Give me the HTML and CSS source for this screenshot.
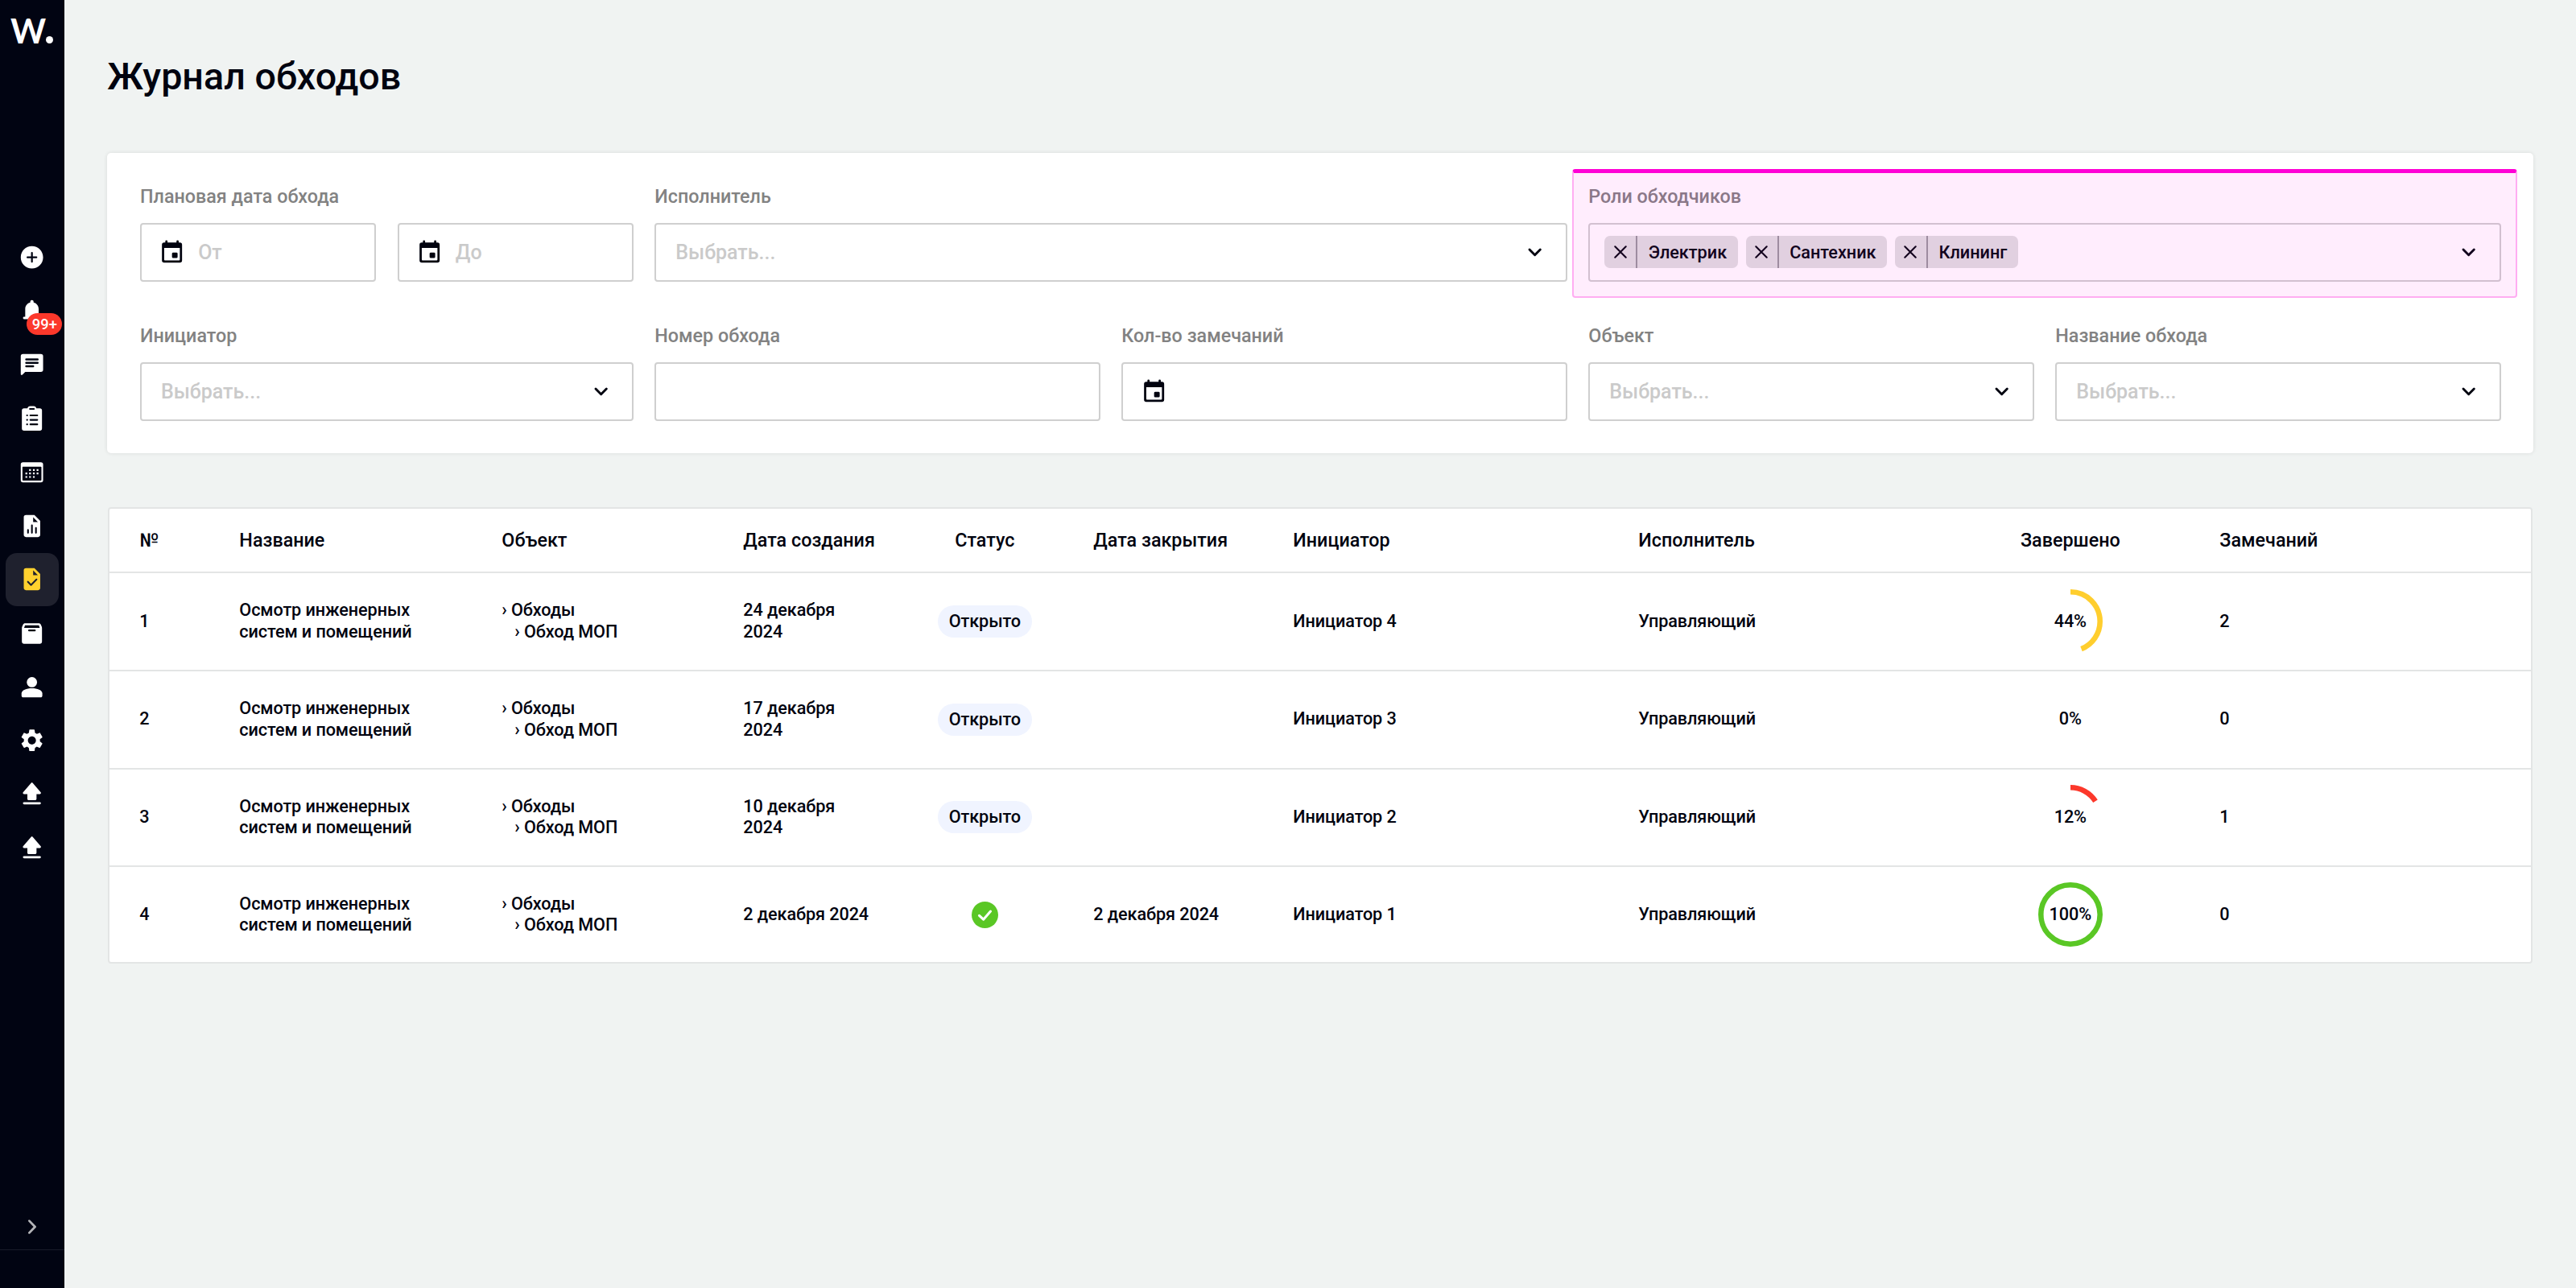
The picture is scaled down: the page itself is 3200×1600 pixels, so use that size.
FILE: index.html
```html
<!DOCTYPE html>
<html lang="ru">
<head>
  <meta charset="UTF-8" />
  <meta name="viewport" content="width=device-width, initial-scale=1.0" />
  <title>Журнал обходов</title>
  <link rel="stylesheet" href="styles.css">
</head>
<body>
  <svg class="sprite" aria-hidden="true">
    <symbol id="chevron" viewBox="0 0 24 24">
      <path d="M7.2 9.4l4.8 4.8 4.8-4.8" fill="none" stroke="currentColor" stroke-width="2.1" stroke-linecap="round" stroke-linejoin="round" />
    </symbol>
    <symbol id="event" viewBox="0 0 24 24">
      <path fill-rule="evenodd" d="M7 1a1 1 0 0 1 1 1v1h8V2a1 1 0 0 1 2 0v1h1a2 2 0 0 1 2 2v14a2 2 0 0 1-2 2H5a2 2 0 0 1-2-2V5a2 2 0 0 1 2-2h1V2a1 1 0 0 1 1-1zM5 8v10.3a.7.7 0 0 0 .7.7h12.6a.7.7 0 0 0 .7-.7V8zM13 12h3a1 1 0 0 1 1 1v3a1 1 0 0 1-1 1h-3a1 1 0 0 1-1-1v-3a1 1 0 0 1 1-1z" />
    </symbol>
    <symbol id="close" viewBox="0 0 16 16">
      <path d="M1.3 1.3l13.4 13.4M14.7 1.3L1.3 14.7" fill="none" stroke="currentColor" stroke-width="2.1" stroke-linecap="round" />
    </symbol>
    <symbol id="upload" viewBox="0 0 24 24">
      <path d="M11.4 1.8a.8.8 0 0 1 1.2 0l7.3 8.5c.5.6.1 1.5-.7 1.5h-3.1v4.4a1 1 0 0 1-1 1H8.9a1 1 0 0 1-1-1v-4.4H4.8c-.8 0-1.2-.9-.7-1.5zM5 19h14a1 1 0 0 1 0 2.1H5A1 1 0 0 1 5 19z" />
    </symbol>
  </svg>

  <aside class="sidebar">
    <div class="logo">W<span class="logo-dot"></span></div>

    <nav class="menu">
      <a class="menu-item">
        <svg viewBox="0 0 24 24"><path d="M12 2C6.48 2 2 6.48 2 12s4.48 10 10 10 10-4.48 10-10S17.52 2 12 2zm4 10.8h-3.2V16a.8.8 0 0 1-1.6 0v-3.2H8a.8.8 0 0 1 0-1.6h3.2V8a.8.8 0 0 1 1.6 0v3.2H16a.8.8 0 0 1 0 1.6z" /></svg>
      </a>
      <a class="menu-item">
        <svg viewBox="0 0 24 24"><path d="M5 19a1 1 0 0 1 0-2h1v-7c0-2.9 1.8-5.1 4.5-5.8v-.7a1.5 1.5 0 0 1 3 0v.7C16.2 4.9 18 7.1 18 10v7h1a1 1 0 0 1 0 2zM10 20h4a2 2 0 0 1-4 0z" /></svg>
        <span class="badge">99+</span>
      </a>
      <a class="menu-item">
        <svg viewBox="0 0 24 24"><path fill-rule="evenodd" d="M4 2h16a2 2 0 0 1 2 2v12a2 2 0 0 1-2 2H6l-2.5 2.5c-.6.6-1.5.2-1.5-.6V4a2 2 0 0 1 2-2zM6.9 6a.9.9 0 0 0 0 1.8h10.2a.9.9 0 0 0 0-1.8zM6.9 9a.9.9 0 0 0 0 1.8h10.2a.9.9 0 0 0 0-1.8zM6.9 12a.9.9 0 0 0 0 1.8h6.2a.9.9 0 0 0 0-1.8z" /></svg>
      </a>
      <a class="menu-item">
        <svg viewBox="0 0 24 24"><path d="M5 3h3c.2-1.2 1.2-2 2.4-2h3.2c1.2 0 2.2.8 2.4 2h3a2 2 0 0 1 2 2v16a2 2 0 0 1-2 2H5a2 2 0 0 1-2-2V5a2 2 0 0 1 2-2z" />
          <path class="cut" d="M10.2 3.6h3.6M10.6 9.4h6.2M10.6 13.4h6.2M10.6 17.4h6.2M7.6 9.4h.2M7.6 13.4h.2M7.6 17.4h.2" /></svg>
      </a>
      <a class="menu-item">
        <svg viewBox="0 0 24 24"><path fill-rule="evenodd" d="M4 3h16a2 2 0 0 1 2 2v14a2 2 0 0 1-2 2H4a2 2 0 0 1-2-2V5a2 2 0 0 1 2-2zM4 7a.5.5 0 0 0-.5.5v11.3a.7.7 0 0 0 .7.7h15.6a.7.7 0 0 0 .7-.7V7.5A.5.5 0 0 0 20 7z" />
          <path d="M9.5 9.2h1.6v1.6H9.5zM12.9 9.2h1.6v1.6h-1.6zM16.2 9.2h1.6v1.6h-1.6zM6.2 12.3h1.6v1.6H6.2zM9.5 12.3h1.6v1.6H9.5zM12.9 12.3h1.6v1.6h-1.6zM16.2 12.3h1.6v1.6h-1.6zM6.2 15.4h1.6V17H6.2zM9.5 15.4h1.6V17H9.5zM12.9 15.4h1.6V17h-1.6z" /></svg>
      </a>
      <a class="menu-item">
        <svg viewBox="0 0 24 24"><path fill-rule="evenodd" d="M6.7 2h7.5l5.2 5.2v12.5a2 2 0 0 1-2 2H6.7a2 2 0 0 1-2-2V4a2 2 0 0 1 2-2zM13.1 4v4.2h4.2z" />
          <path class="cut" d="M8.5 15.3v2.6M12 11.2v6.7M15.6 13.5v4.4" /></svg>
      </a>
      <a class="menu-item active">
        <svg viewBox="0 0 24 24"><path fill-rule="evenodd" d="M6.7 2h7.5l5.2 5.2v12.5a2 2 0 0 1-2 2H6.7a2 2 0 0 1-2-2V4a2 2 0 0 1 2-2zM13.1 4v4.2h4.2z" />
          <path class="cut" d="M8.4 14.2l2.8 2.9 4.9-5" /></svg>
      </a>
      <a class="menu-item">
        <svg viewBox="0 0 24 24"><path fill-rule="evenodd" d="M5.8 3h12.4c.7 0 1.3.4 1.6 1l.9 2c.2.5.3.9.3 1.4v12.3a1.7 1.7 0 0 1-1.7 1.7H4.7A1.7 1.7 0 0 1 3 19.7V7.4c0-.5.1-.9.3-1.4l.9-2c.3-.6.9-1 1.6-1zM5.8 4.8L5 7.2h14l-.8-2.4zM9.4 8.7a.8.8 0 0 0 0 1.6h5.2a.8.8 0 0 0 0-1.6z" /></svg>
      </a>
      <a class="menu-item">
        <svg viewBox="0 0 24 24"><circle cx="12" cy="7.5" r="4.6" /><path d="M12 13c4.8 0 9.3 1.7 9.3 4.6v2c0 .9-.6 1.5-1.5 1.5H4.2c-.9 0-1.5-.6-1.5-1.5v-2C2.7 14.7 7.2 13 12 13z" /></svg>
      </a>
      <a class="menu-item">
        <svg viewBox="0 0 24 24"><path d="M19.14 12.94c.04-.3.06-.61.06-.94 0-.32-.02-.64-.07-.94l2.03-1.58c.18-.14.23-.41.12-.61l-1.92-3.32c-.12-.22-.37-.29-.59-.22l-2.39.96c-.5-.38-1.03-.7-1.62-.94l-.36-2.54c-.04-.24-.24-.41-.48-.41h-3.84c-.24 0-.43.17-.47.41l-.36 2.54c-.59.24-1.13.57-1.62.94l-2.39-.96c-.22-.08-.47 0-.59.22L2.74 8.87c-.12.21-.08.47.12.61l2.03 1.58c-.05.3-.09.63-.09.94s.02.64.07.94l-2.03 1.58c-.18.14-.23.41-.12.61l1.92 3.32c.12.22.37.29.59.22l2.39-.96c.5.38 1.03.7 1.62.94l.36 2.54c.05.24.24.41.48.41h3.84c.24 0 .44-.17.47-.41l.36-2.54c.59-.24 1.13-.56 1.62-.94l2.39.96c.22.08.47 0 .59-.22l1.92-3.32c.12-.22.07-.47-.12-.61l-2.01-1.58zM12 15.6c-1.98 0-3.6-1.62-3.6-3.6s1.62-3.6 3.6-3.6 3.6 1.62 3.6 3.6-1.62 3.6-3.6 3.6z" /></svg>
      </a>
      <a class="menu-item"><svg><use href="#upload" /></svg></a>
      <a class="menu-item"><svg><use href="#upload" /></svg></a>
    </nav>

    <div class="expand">
      <svg viewBox="0 0 24 24"><path d="M9.5 6.8l5 5.2-5 5.2" /></svg>
    </div>
    <div class="sidebar-footer"></div>
  </aside>

  <main class="content">
    <h1>Журнал обходов</h1>

    <section class="filters">
      <div class="field">
        <label>Плановая дата обхода</label>
        <div class="dates">
          <div class="input"><svg class="icon"><use href="#event" /></svg><span>От</span></div>
          <div class="input"><svg class="icon"><use href="#event" /></svg><span>До</span></div>
        </div>
      </div>
      <div class="field span-2">
        <label>Исполнитель</label>
        <div class="input select"><span>Выбрать...</span><svg class="icon"><use href="#chevron" /></svg></div>
      </div>
      <div class="field span-2 highlight">
        <label>Роли обходчиков</label>
        <div class="input select with-tags">
          <div class="tags">
            <div class="tag"><button aria-label="Удалить"><svg><use href="#close" /></svg></button><b>Электрик</b></div>
            <div class="tag"><button aria-label="Удалить"><svg><use href="#close" /></svg></button><b>Сантехник</b></div>
            <div class="tag"><button aria-label="Удалить"><svg><use href="#close" /></svg></button><b>Клининг</b></div>
          </div>
          <svg class="icon"><use href="#chevron" /></svg>
        </div>
      </div>

      <div class="field">
        <label>Инициатор</label>
        <div class="input select"><span>Выбрать...</span><svg class="icon"><use href="#chevron" /></svg></div>
      </div>
      <div class="field">
        <label>Номер обхода</label>
        <div class="input"></div>
      </div>
      <div class="field">
        <label>Кол-во замечаний</label>
        <div class="input"><svg class="icon"><use href="#event" /></svg></div>
      </div>
      <div class="field">
        <label>Объект</label>
        <div class="input select"><span>Выбрать...</span><svg class="icon"><use href="#chevron" /></svg></div>
      </div>
      <div class="field">
        <label>Название обхода</label>
        <div class="input select"><span>Выбрать...</span><svg class="icon"><use href="#chevron" /></svg></div>
      </div>
    </section>

    <section class="table">
      <div class="row head">
        <div>№</div>
        <div>Название</div>
        <div>Объект</div>
        <div>Дата создания</div>
        <div class="center">Статус</div>
        <div>Дата закрытия</div>
        <div>Инициатор</div>
        <div>Исполнитель</div>
        <div class="center">Завершено</div>
        <div>Замечаний</div>
      </div>

      <div class="row">
        <div>1</div>
        <div>Осмотр инженерных<br>систем и помещений</div>
        <div>› Обходы<p class="nested">› Обход МОП</p></div>
        <div>24 декабря<br>2024</div>
        <div class="center"><span class="status">Открыто</span></div>
        <div></div>
        <div>Инициатор 4</div>
        <div>Управляющий</div>
        <div class="center">
          <div class="progress yellow">
            <svg viewBox="0 0 80 80"><circle cx="40" cy="40" r="36.7" pathLength="100" stroke-dasharray="44 100" /></svg>
            <span>44%</span>
          </div>
        </div>
        <div>2</div>
      </div>

      <div class="row">
        <div>2</div>
        <div>Осмотр инженерных<br>систем и помещений</div>
        <div>› Обходы<p class="nested">› Обход МОП</p></div>
        <div>17 декабря<br>2024</div>
        <div class="center"><span class="status">Открыто</span></div>
        <div></div>
        <div>Инициатор 3</div>
        <div>Управляющий</div>
        <div class="center">
          <div class="progress"><span>0%</span></div>
        </div>
        <div>0</div>
      </div>

      <div class="row">
        <div>3</div>
        <div>Осмотр инженерных<br>систем и помещений</div>
        <div>› Обходы<p class="nested">› Обход МОП</p></div>
        <div>10 декабря<br>2024</div>
        <div class="center"><span class="status">Открыто</span></div>
        <div></div>
        <div>Инициатор 2</div>
        <div>Управляющий</div>
        <div class="center">
          <div class="progress red">
            <svg viewBox="0 0 80 80"><circle cx="40" cy="40" r="36.7" pathLength="100" stroke-dasharray="16 100" /></svg>
            <span>12%</span>
          </div>
        </div>
        <div>1</div>
      </div>

      <div class="row">
        <div>4</div>
        <div>Осмотр инженерных<br>систем и помещений</div>
        <div>› Обходы<p class="nested">› Обход МОП</p></div>
        <div>2 декабря 2024</div>
        <div class="center">
          <svg class="done" viewBox="0 0 32 32"><circle cx="16" cy="16" r="16" /><path d="M9.2 16.8l5 4.7 8.6-9.8" /></svg>
        </div>
        <div>2 декабря 2024</div>
        <div>Инициатор 1</div>
        <div>Управляющий</div>
        <div class="center">
          <div class="progress green">
            <svg viewBox="0 0 80 80"><circle cx="40" cy="40" r="36.7" /></svg>
            <span>100%</span>
          </div>
        </div>
        <div>0</div>
      </div>
    </section>
  </main>
</body>
</html>
```
FILE: styles.css
```css
* {
  box-sizing: border-box;
}

body {
  margin: 0;
  height: 100vh;
  display: flex;
  background-color: #f0f3f2;
  color: #01030f;
  font-family: Roboto, sans-serif;
  font-weight: 500;
}

.sprite {
  position: absolute;
  width: 0;
  height: 0;
}

/* Sidebar */

.sidebar {
  width: 80px;
  flex-shrink: 0;
  display: flex;
  flex-direction: column;
  background-color: #010412;
}

.logo {
  height: 286.67px;
  padding: 14px 0 0 13px;
  display: flex;
  align-items: baseline;
  color: white;
  font-family: Lato, sans-serif;
  font-size: 42px;
  font-weight: 700;
  line-height: 49px;
}

.logo-dot {
  width: 9px;
  height: 9px;
  border-radius: 50%;
  background-color: white;
}

.menu-item {
  position: relative;
  width: 66.67px;
  height: 66.67px;
  margin: 0 auto;
  display: flex;
  align-items: center;
  justify-content: center;
  border-radius: 14px;
}

.menu-item svg {
  width: 33.33px;
  height: 33.33px;
  fill: white;
}

.menu-item .cut {
  fill: none;
  stroke: #010412;
  stroke-width: 1.5;
  stroke-linecap: round;
  stroke-linejoin: round;
}

.menu-item.active {
  background-color: #1f212e;
}

.menu-item.active svg {
  fill: #ffd12e;
}

.menu-item.active .cut {
  stroke: #1f212e;
}

.badge {
  position: absolute;
  top: 36px;
  right: -4px;
  width: 44px;
  height: 27px;
  border-radius: 14px;
  background-color: #fc382b;
  color: white;
  font-size: 18.33px;
  line-height: 28px;
  text-align: center;
}

.expand {
  margin-top: auto;
  height: 57px;
  display: flex;
  align-items: center;
  justify-content: center;
  border-bottom: 1px solid #191c2a;
}

.expand svg {
  width: 34px;
  height: 34px;
  fill: none;
  stroke: #b3b4b8;
  stroke-width: 2;
  stroke-linecap: round;
  stroke-linejoin: round;
}

.sidebar-footer {
  height: 47px;
}

/* Content */

.content {
  flex: 1;
  padding: 67px 53.33px 0;
}

h1 {
  margin: 0 0 67px;
  font-size: 46.67px;
  font-weight: 500;
  line-height: 56px;
}

.filters {
  display: grid;
  grid-template-columns: 612.67px repeat(4, 1fr);
  gap: 51.33px 26.67px;
  padding: 38px 40px 40px 40.67px;
  border-radius: 5px;
  background-color: white;
  box-shadow: 0 0 5px rgba(0, 0, 0, 0.1);
}

.field label {
  display: block;
  margin-bottom: 15.33px;
  color: #828282;
  font-size: 23.33px;
  line-height: 33.33px;
}

.span-2 {
  grid-column: span 2;
}

.dates {
  display: flex;
  gap: 26.67px;
}

.input {
  flex: 1;
  height: 73.33px;
  padding: 0 21.33px;
  display: flex;
  align-items: center;
  gap: 15.5px;
  border: 2px solid #cfcfcf;
  border-radius: 4px;
  color: #cacaca;
  font-size: 25px;
}

.select {
  justify-content: space-between;
  padding-left: 24px;
}

.icon {
  width: 33.33px;
  height: 33.33px;
  color: #01030f;
  fill: #01030f;
}

.highlight {
  position: relative;
}

.highlight::after {
  content: "";
  position: absolute;
  top: -18px;
  right: -20px;
  bottom: -20px;
  left: -20px;
  border: 2px solid rgba(255, 0, 214, 0.27);
  border-top: 5px solid #ff00d6;
  border-radius: 4px;
  background-color: rgba(255, 0, 230, 0.07);
}

.with-tags {
  padding-left: 18px;
}

.tags {
  display: flex;
  gap: 10px;
}

.tag {
  height: 40px;
  display: flex;
  align-items: center;
  border-radius: 7px;
  background-color: #dfe0e0;
  color: #01030f;
  font-size: 21.67px;
}

.tag button {
  width: 41px;
  height: 40px;
  padding: 0;
  display: flex;
  align-items: center;
  justify-content: center;
  border: none;
  border-right: 2px solid #97979b;
  background: none;
}

.tag button svg {
  width: 16px;
  height: 16px;
  color: #01030f;
}

.tag b {
  padding: 0 13.5px;
  font-weight: 500;
}

/* Table */

.table {
  margin: 67px 1px 0;
  border: 2px solid #e3e5e5;
  border-radius: 4px;
  background-color: white;
  font-size: 21.67px;
  line-height: 26.67px;
  letter-spacing: -0.1px;
}

.row {
  height: 121.67px;
  padding-left: 37px;
  display: grid;
  grid-template-columns: 124px 326px 300px 165px 270px 248px 429px 351px 371px 1fr;
  align-items: center;
  border-bottom: 2px solid #e3e5e5;
}

.row.head {
  height: 80px;
  font-size: 23.33px;
  letter-spacing: 0;
}

.row:last-child {
  height: 118px;
  border-bottom: none;
}

.center {
  display: flex;
  justify-content: center;
}

.nested {
  margin: 0 0 0 16px;
}

.status {
  padding: 0 13.67px;
  border-radius: 20px;
  background-color: #f0f4ff;
  line-height: 40px;
}

.progress {
  display: grid;
  place-items: center;
  width: 80px;
  height: 80px;
}

.progress svg,
.progress span {
  grid-area: 1 / 1;
}

.progress svg {
  width: 80px;
  height: 80px;
  fill: none;
  stroke-width: 6.6;
  transform: rotate(-90deg);
}

.yellow svg {
  stroke: #ffce2e;
}

.red svg {
  stroke: #fc382b;
}

.green svg {
  stroke: #5ac725;
}

.done {
  width: 33px;
  height: 33px;
  fill: #5ac725;
}

.done path {
  fill: none;
  stroke: white;
  stroke-width: 3;
  stroke-linecap: round;
  stroke-linejoin: round;
}
```
